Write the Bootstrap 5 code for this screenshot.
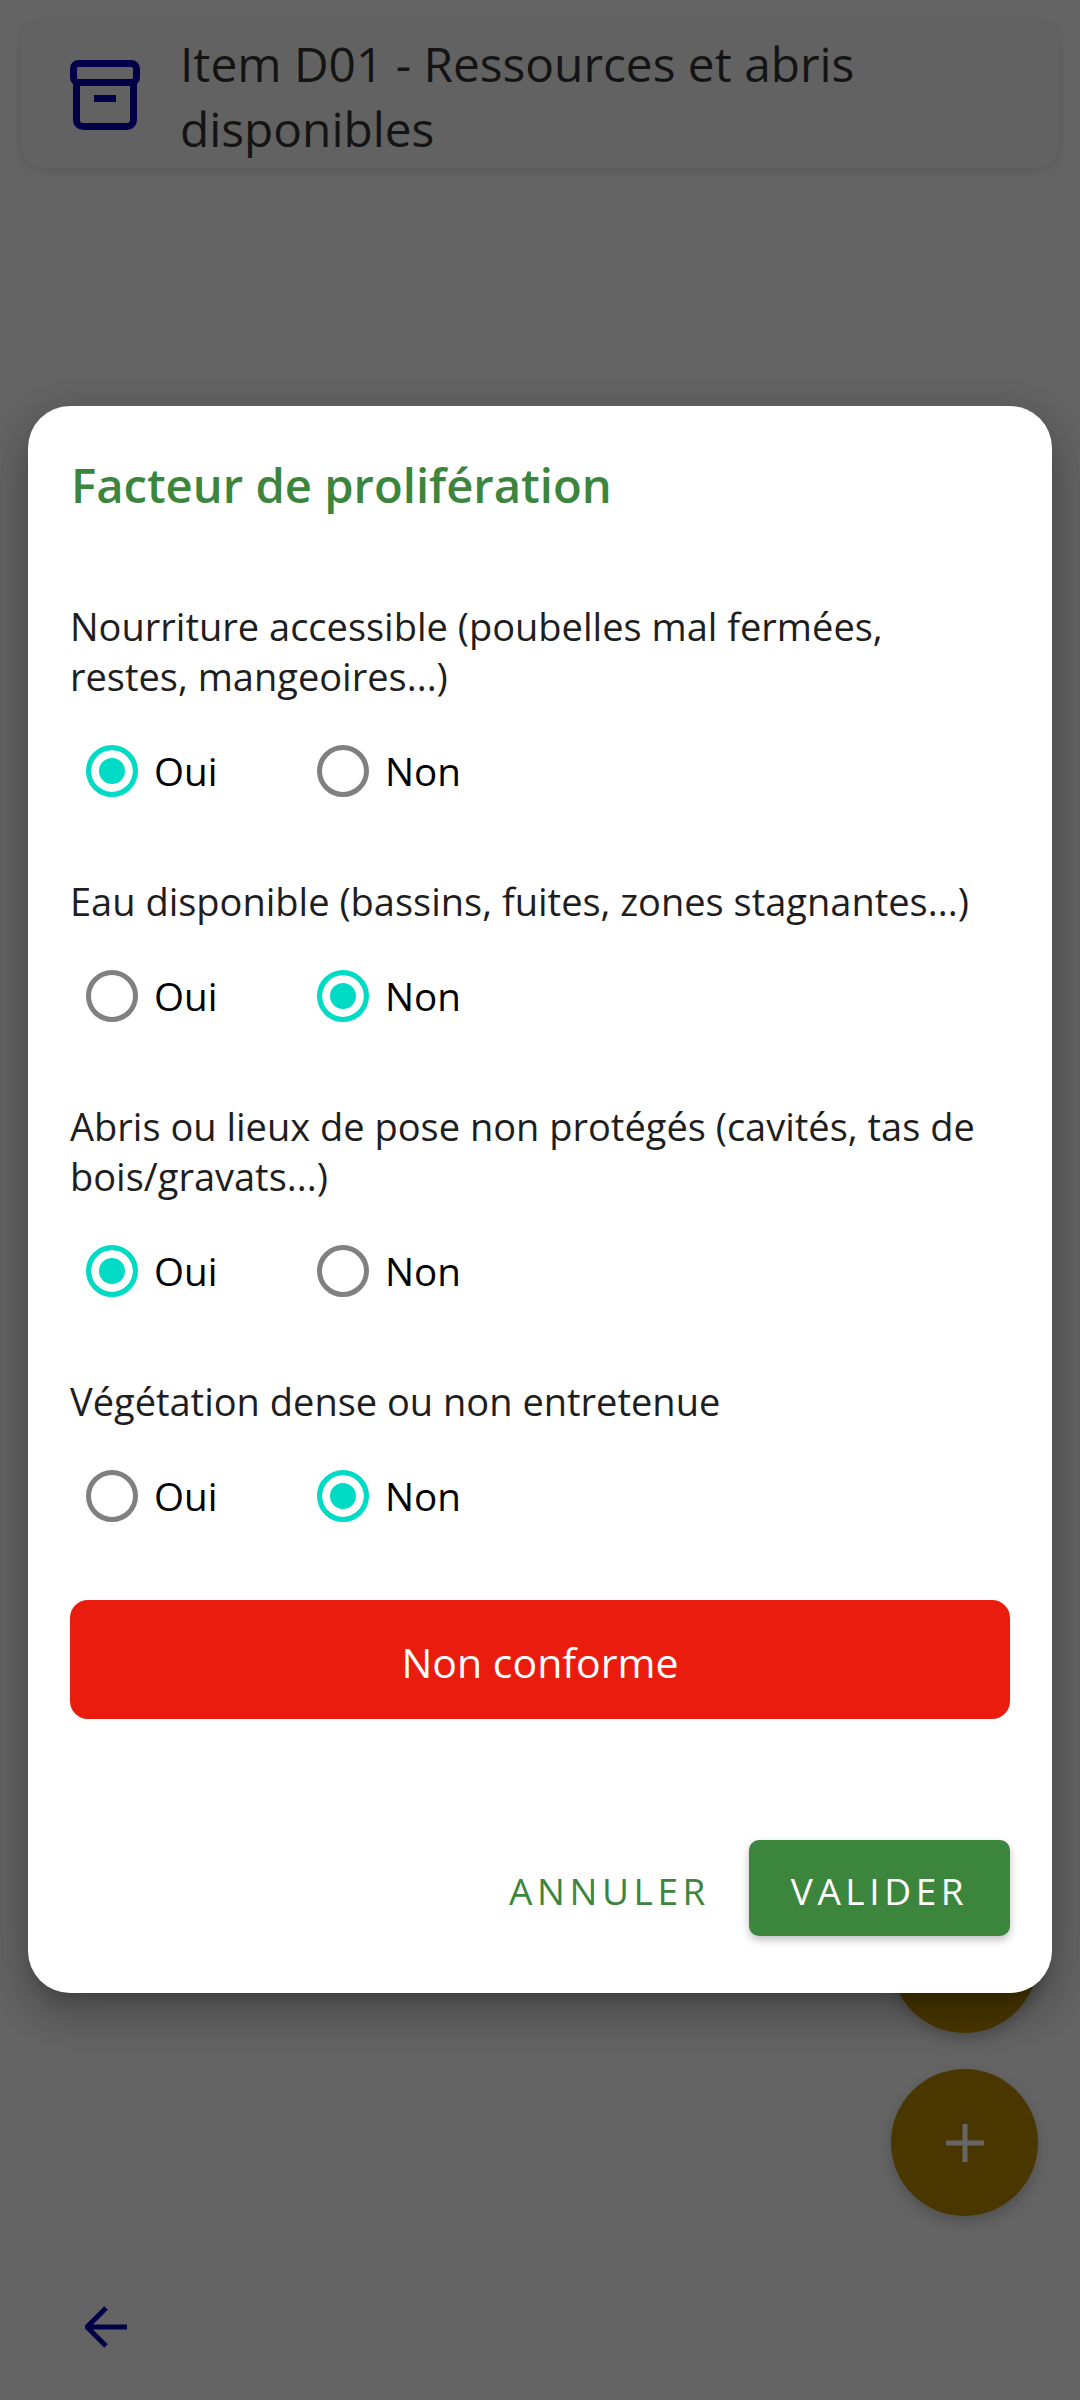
<!DOCTYPE html>
<html lang="fr">
<head>
    <meta charset="utf-8">
    <title>Facteur de prolifération</title>
    <link href="https://cdn.jsdelivr.net/npm/bootstrap@5.3.0/dist/css/bootstrap.min.css" rel="stylesheet">
    <style>
        body {
            background: #646464;
            font-family: "Open Sans", "Liberation Sans", sans-serif;
        }
        .screen {
            position: relative;
            height: 2400px;
            overflow: hidden;
            padding: 21px 21px 0;
        }
        .item-head {
            height: 147px;
            background: #626262;
            border-radius: 22px;
            box-shadow: 0 2px 8px rgba(0, 0, 0, .12);
            padding-left: 49px;
            gap: 40px;
            color: #141414;
            font-size: 47.8px;
            line-height: 65px;
        }
        .item-title {
            margin-top: 3px;
        }
        .dialog-box {
            width: 1024px;
            height: 1587px;
            margin: 238px 0 0 7px;
            border: 0;
            border-radius: 42px;
            padding: 0 42px;
            background: #fff;
            box-shadow: 0 24px 38px 3px rgba(0, 0, 0, .14), 0 9px 46px 8px rgba(0, 0, 0, .12), 0 11px 15px -7px rgba(0, 0, 0, .2);
            z-index: 2;
        }
        .dialog-title {
            color: #3b863c;
            font-size: 47.2px;
            font-weight: 600;
            line-height: 60px;
            margin: 49px 0 88px 1px;
        }
        .question {
            color: #1e1e1e;
            font-size: 38px;
            line-height: 50px;
            margin-top: -2px;
            margin-bottom: 2px;
            padding-right: 10px;
        }
        .answers {
            height: 136px;
            margin-bottom: 39px;
            align-items: center;
        }
        .answer {
            display: flex;
            align-items: center;
            margin: 0;
            padding: 0 0 0 16px;
            min-height: 0;
            width: 231px;
            gap: 16px;
            color: #000;
            font-size: 38.6px;
        }
        .answer span {
            margin-top: 2px;
        }
        .answer .form-check-input {
            float: none;
            margin: 0;
            width: 52px;
            height: 52px;
            border: 5px solid #808080;
            background-color: #fff;
            background-image: none;
        }
        .answer .form-check-input:checked {
            border-color: #00dbc6;
            background-color: #00dbc6;
            background-image: none;
            box-shadow: inset 0 0 0 8px #fff;
        }
        .status-btn {
            height: 119px;
            background: #ea1c0e;
            border: 0;
            border-radius: 18px;
            color: #fff;
            font-size: 41px;
            padding: 9px 12px 3px;
            margin-top: -3px;
        }
        .dialog-actions {
            margin-top: 121px;
            gap: 40px;
            align-items: center;
        }
        .action-btn {
            height: 96px;
            border: 0;
            border-radius: 10px;
            padding: 6px 0 0;
            font-size: 37px;
            letter-spacing: 4.6px;
        }
        .action-cancel {
            color: #3b863c;
            background: none;
            width: 200px;
        }
        .action-ok {
            color: #fff;
            background: #3b863c;
            width: 261px;
            box-shadow: 0 4px 8px rgba(0, 0, 0, .25);
        }
        .fab-round {
            position: absolute;
            left: 891px;
            width: 147px;
            height: 147px;
            border-radius: 50%;
            background: #4a3700;
            box-shadow: 0 6px 14px rgba(0, 0, 0, .2);
        }
        .fab-under {
            top: 1886px;
            z-index: 1;
        }
        .fab-add {
            top: 2069px;
            z-index: 4;
        }
        .bottom-area {
            position: absolute;
            left: 0;
            right: 0;
            top: 2075px;
            bottom: 0;
            background: #646464;
            z-index: 3;
        }
        .back-link {
            position: absolute;
            left: 85px;
            top: 231px;
        }
    </style>
</head>
<body>
    <div class="screen d-flex flex-column">
        <div class="item-head d-flex align-items-center">
            <svg width="70" height="70" viewBox="0 0 70 70" fill="none" stroke="#000046" stroke-width="7">
                <rect x="3.5" y="3.5" width="63" height="19" rx="5"/>
                <path d="M6.5 22v38a6.5 6.5 0 0 0 6.5 6.5h44a6.5 6.5 0 0 0 6.5-6.5V22"/>
                <path d="M24 38.5h22"/>
            </svg>
            <div class="item-title">Item D01 - Ressources et abris<br>disponibles</div>
        </div>

        <div class="fab-round fab-under"></div>

        <div class="modal-content dialog-box">
            <h2 class="dialog-title">Facteur de prolifération</h2>

            <p class="question">Nourriture accessible (poubelles mal fermées, restes, mangeoires...)</p>
            <div class="answers d-flex">
                <label class="form-check answer"><input class="form-check-input" type="radio" name="q1" checked><span>Oui</span></label>
                <label class="form-check answer"><input class="form-check-input" type="radio" name="q1"><span>Non</span></label>
            </div>

            <p class="question">Eau disponible (bassins, fuites, zones stagnantes...)</p>
            <div class="answers d-flex">
                <label class="form-check answer"><input class="form-check-input" type="radio" name="q2"><span>Oui</span></label>
                <label class="form-check answer"><input class="form-check-input" type="radio" name="q2" checked><span>Non</span></label>
            </div>

            <p class="question">Abris ou lieux de pose non protégés (cavités, tas de bois/gravats...)</p>
            <div class="answers d-flex">
                <label class="form-check answer"><input class="form-check-input" type="radio" name="q3" checked><span>Oui</span></label>
                <label class="form-check answer"><input class="form-check-input" type="radio" name="q3"><span>Non</span></label>
            </div>

            <p class="question">Végétation dense ou non entretenue</p>
            <div class="answers d-flex">
                <label class="form-check answer"><input class="form-check-input" type="radio" name="q4"><span>Oui</span></label>
                <label class="form-check answer"><input class="form-check-input" type="radio" name="q4" checked><span>Non</span></label>
            </div>

            <button type="button" class="btn status-btn w-100">Non conforme</button>

            <div class="dialog-actions d-flex justify-content-end">
                <button type="button" class="btn action-btn action-cancel">ANNULER</button>
                <button type="button" class="btn action-btn action-ok">VALIDER</button>
            </div>
        </div>

        <div class="bottom-area">
            <a class="back-link" href="#" aria-label="Retour">
                <svg class="d-block" width="42" height="42" viewBox="0 0 42 42" fill="none" stroke="#000046" stroke-width="5">
                    <path d="M42 21H4M21 2L2 21l19 19"/>
                </svg>
            </a>
        </div>

        <div class="fab-round fab-add d-flex align-items-center justify-content-center">
            <svg width="38" height="38" viewBox="0 0 38 38" fill="none" stroke="#666" stroke-width="5">
                <path d="M19 0v38M0 19h38"/>
            </svg>
        </div>
    </div>

    <script src="https://cdn.jsdelivr.net/npm/bootstrap@5.3.0/dist/js/bootstrap.bundle.min.js"></script>
</body>
</html>
